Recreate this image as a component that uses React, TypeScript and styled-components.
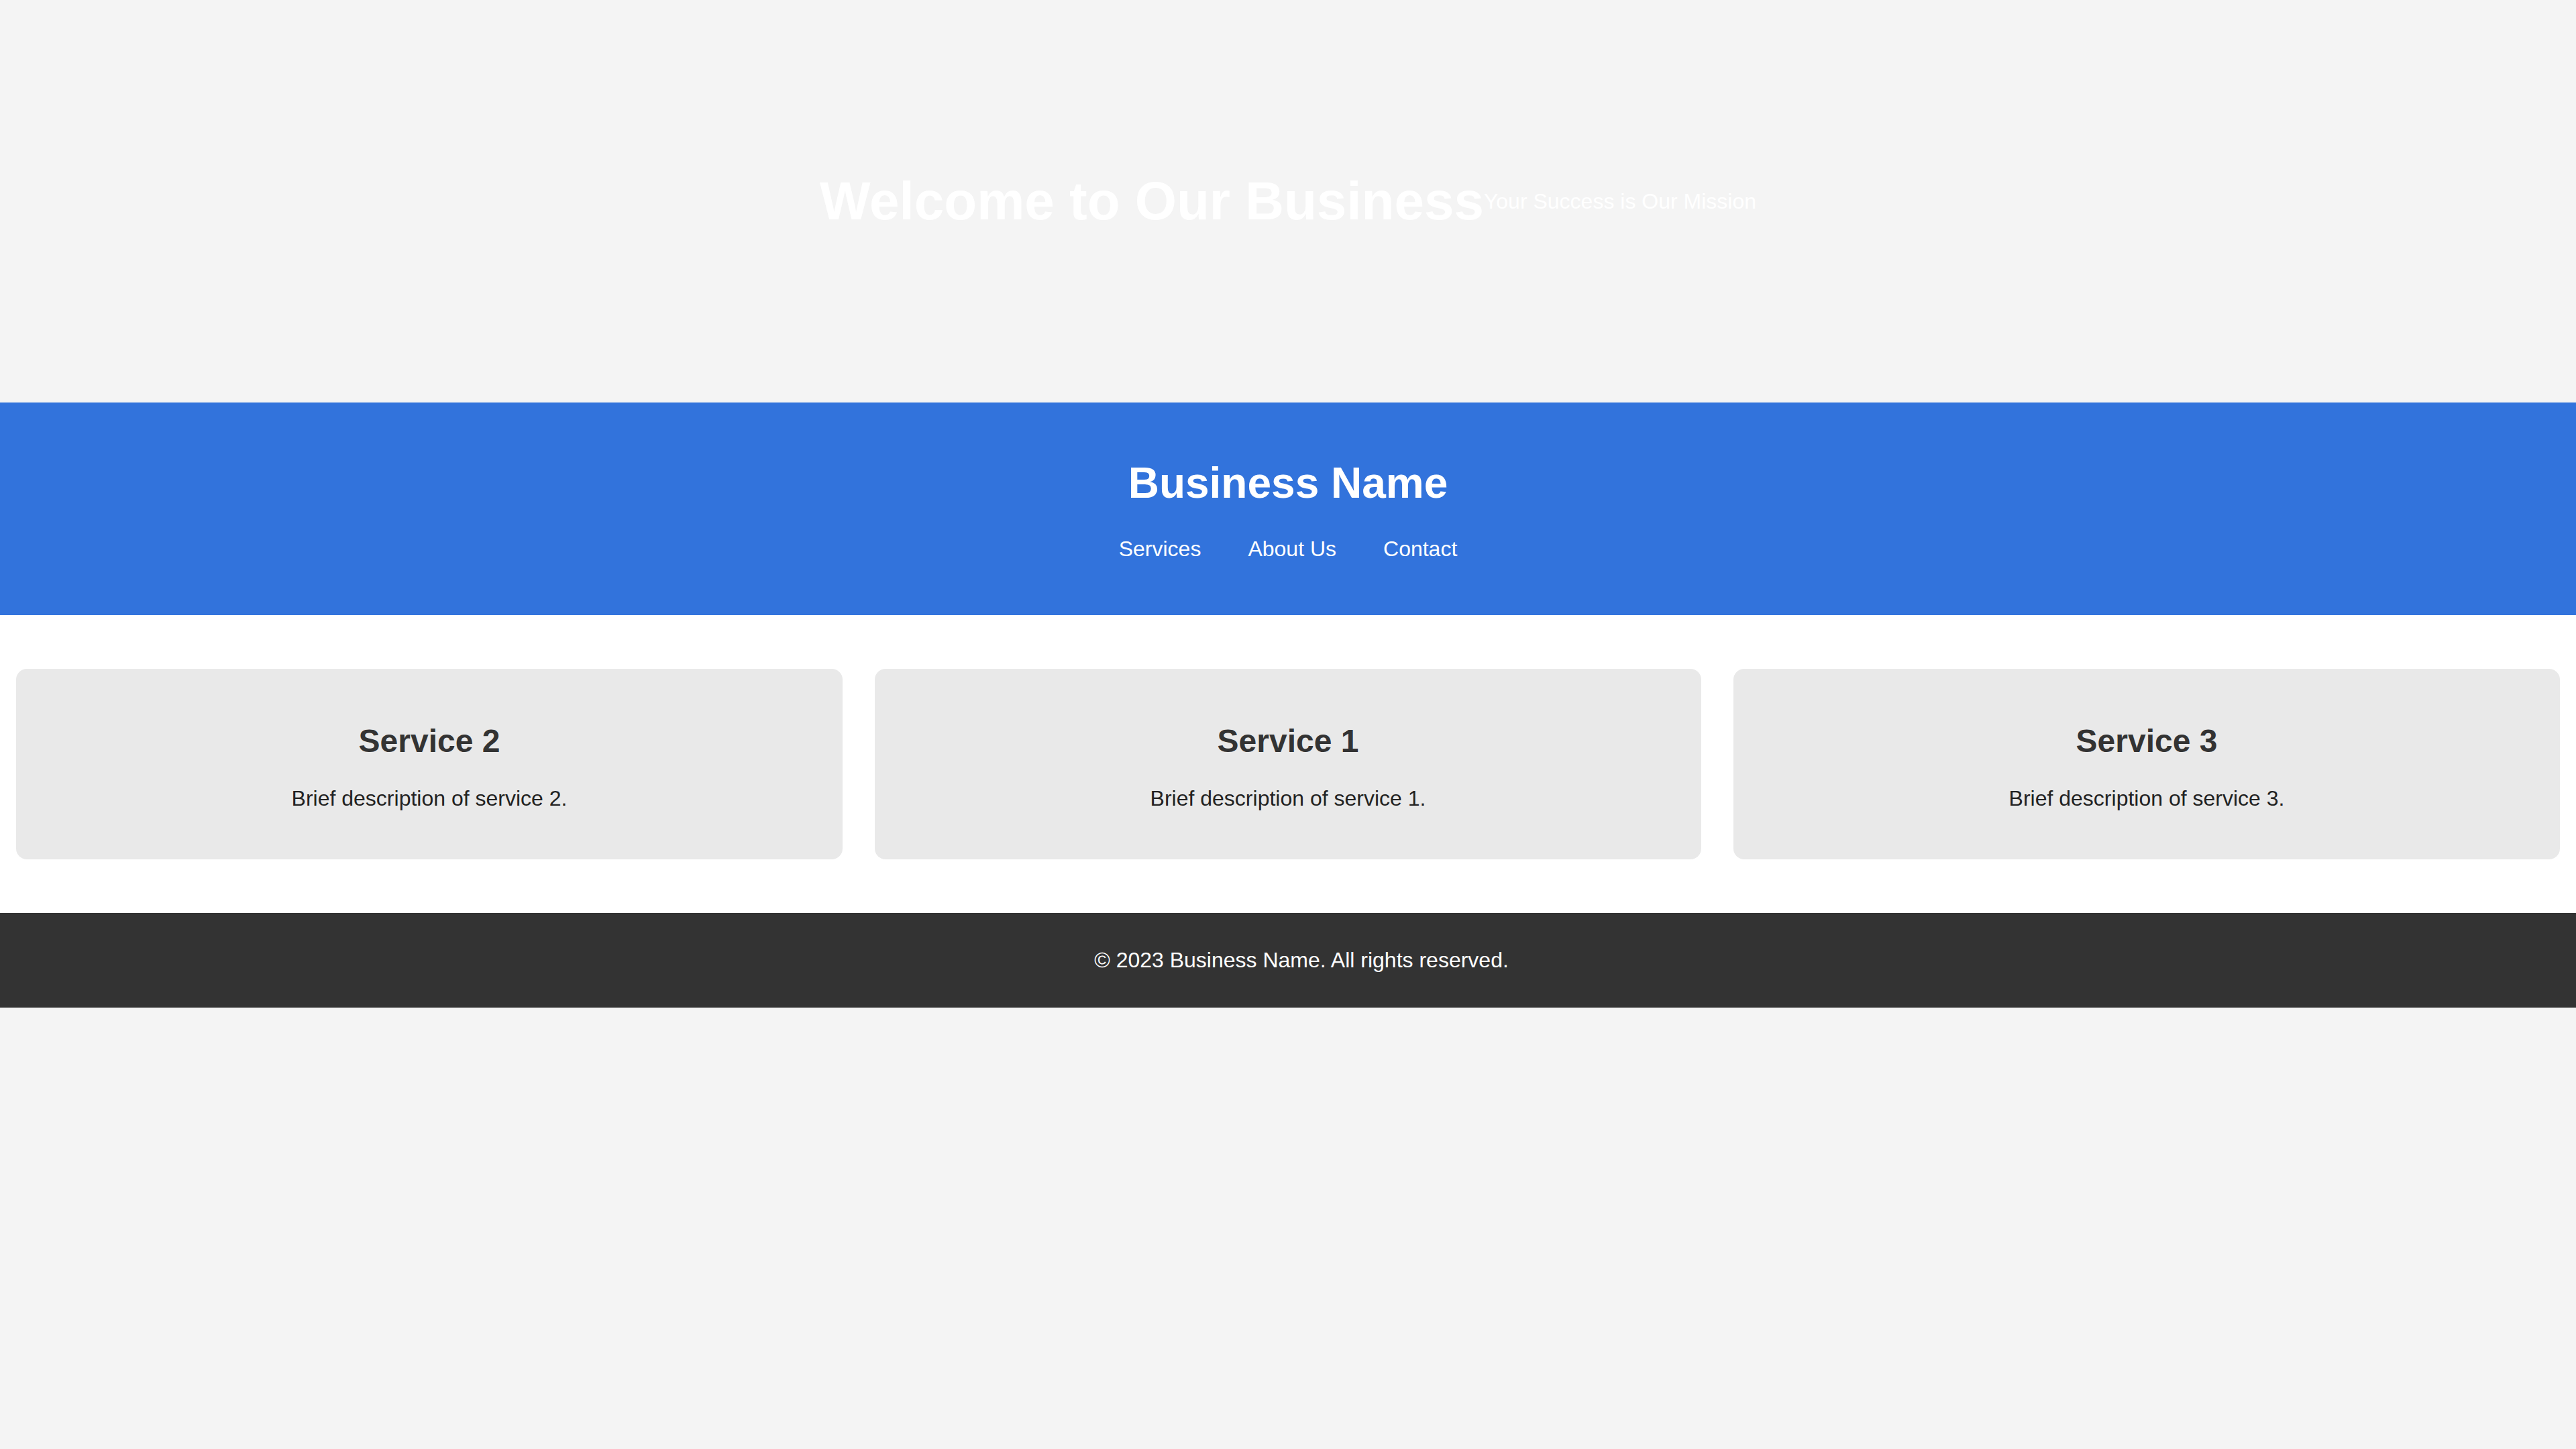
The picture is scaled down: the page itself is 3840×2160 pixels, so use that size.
import React from "react";
import styled, { createGlobalStyle } from "styled-components";

// Global page styles
const GlobalStyle = createGlobalStyle`
  html, body {
    margin: 0;
    padding: 0;
    background: #f4f4f4;
    font-family: "Liberation Sans", Arial, sans-serif;
    color: #333;
  }
`;

const Hero = styled.section`
  height: 600px;
  display: flex;
  align-items: center;
  justify-content: center;
  color: #fff;
`;

const HeroTitle = styled.h1`
  font-size: 80px;
  font-weight: 700;
  margin: 0;
  line-height: normal;
`;

const HeroTagline = styled.p`
  font-size: 32px;
  margin: 0;
  line-height: normal;
`;

const Header = styled.header`
  background: #3273dc;
  color: #fff;
  text-align: center;
  padding: 40px 0;
`;

const BrandName = styled.h1`
  font-size: 64px;
  font-weight: 700;
  margin: 43px 0;
  line-height: normal;
`;

const NavList = styled.ul`
  list-style: none;
  display: flex;
  justify-content: center;
  gap: 70px;
  margin: 0 0 40px;
  padding: 0;
`;

const NavLink = styled.a`
  color: #fff;
  text-decoration: none;
  font-size: 32px;
  line-height: normal;
`;

const ServicesSection = styled.section`
  background: #fff;
  display: flex;
  gap: 48px;
  padding: 80px 24px;
`;

const ServiceCard = styled.div`
  flex: 1;
  background: #e9e9e9;
  border-radius: 16px;
  padding: 40px;
  text-align: center;
`;

const ServiceTitle = styled.h2`
  font-size: 48px;
  font-weight: 700;
  margin: 40px 0;
  color: #333;
  line-height: normal;
`;

const ServiceText = styled.p`
  font-size: 32px;
  margin: 32px 0;
  color: #222;
  line-height: normal;
`;

const Footer = styled.footer`
  background: #333;
  color: #fff;
  text-align: center;
  padding: 20px 0 20px 40px;
`;

const FooterText = styled.p`
  font-size: 32px;
  margin: 32px 0;
  line-height: normal;
`;

const services = [
  { title: "Service 2", text: "Brief description of service 2." },
  { title: "Service 1", text: "Brief description of service 1." },
  { title: "Service 3", text: "Brief description of service 3." },
];

const App: React.FC = () => {
  return (
    <>
      <GlobalStyle />
      <Hero>
        <HeroTitle>Welcome to Our Business</HeroTitle>
        <HeroTagline>Your Success is Our Mission</HeroTagline>
      </Hero>

      <Header>
        <BrandName>Business Name</BrandName>
        <nav>
          <NavList>
            <li><NavLink href="#services">Services</NavLink></li>
            <li><NavLink href="#about">About Us</NavLink></li>
            <li><NavLink href="#contact">Contact</NavLink></li>
          </NavList>
        </nav>
      </Header>

      <ServicesSection id="services">
        {services.map((s) => (
          <ServiceCard key={s.title}>
            <ServiceTitle>{s.title}</ServiceTitle>
            <ServiceText>{s.text}</ServiceText>
          </ServiceCard>
        ))}
      </ServicesSection>

      <Footer>
        <FooterText>© 2023 Business Name. All rights reserved.</FooterText>
      </Footer>
    </>
  );
};

export default App;
